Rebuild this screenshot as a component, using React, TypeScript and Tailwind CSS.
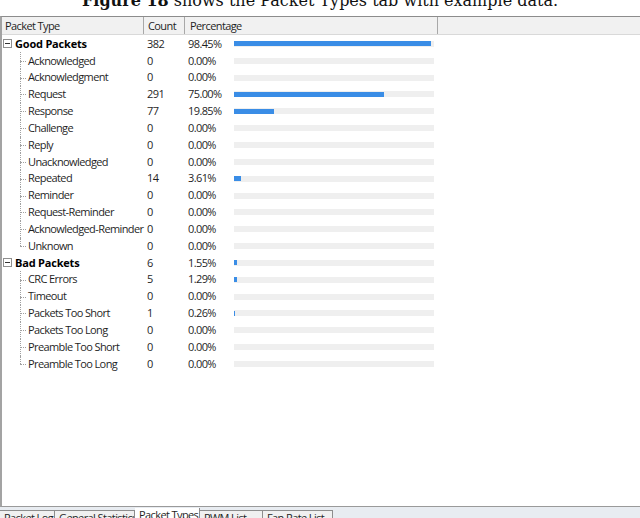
import React from 'react';

type Row = { name: string; count: number; pct: number };

const groups: { title: string; count: number; pct: number; items: Row[] }[] = [
  {
    title: 'Good Packets',
    count: 382,
    pct: 98.45,
    items: [
      { name: 'Acknowledged', count: 0, pct: 0 },
      { name: 'Acknowledgment', count: 0, pct: 0 },
      { name: 'Request', count: 291, pct: 75.0 },
      { name: 'Response', count: 77, pct: 19.85 },
      { name: 'Challenge', count: 0, pct: 0 },
      { name: 'Reply', count: 0, pct: 0 },
      { name: 'Unacknowledged', count: 0, pct: 0 },
      { name: 'Repeated', count: 14, pct: 3.61 },
      { name: 'Reminder', count: 0, pct: 0 },
      { name: 'Request-Reminder', count: 0, pct: 0 },
      { name: 'Acknowledged-Reminder', count: 0, pct: 0 },
      { name: 'Unknown', count: 0, pct: 0 },
    ],
  },
  {
    title: 'Bad Packets',
    count: 6,
    pct: 1.55,
    items: [
      { name: 'CRC Errors', count: 5, pct: 1.29 },
      { name: 'Timeout', count: 0, pct: 0 },
      { name: 'Packets Too Short', count: 1, pct: 0.26 },
      { name: 'Packets Too Long', count: 0, pct: 0 },
      { name: 'Preamble Too Short', count: 0, pct: 0 },
      { name: 'Preamble Too Long', count: 0, pct: 0 },
    ],
  },
];

const tabs = [
  { label: 'Packet Log', w: 'w-[55px]' },
  { label: 'General Statistics', w: 'w-[80px]' },
  { label: 'Packet Types', w: 'w-[65px]' },
  { label: 'PWM List', w: 'w-[63px]' },
  { label: 'Fan Rate List', w: 'w-[70px]' },
];

function Bar({ pct }: { pct: number }) {
  return (
    <div className="w-[200px] h-[6px] bg-[#efefef] flex items-center">
      {pct > 0 && (
        <div className="h-[5px] bg-[#3a8de6]" style={{ width: `${Math.max(1, Math.round(pct * 2))}px` }} />
      )}
    </div>
  );
}

function Cells({ count, pct }: { count: number; pct: number }) {
  return (
    <>
      <div className="w-[42px] pl-[3px]">{count}</div>
      <div className="w-[48px] pl-[2px]">{pct.toFixed(2)}%</div>
      <Bar pct={pct} />
    </>
  );
}

export default function App() {
  return (
    <div
      className="w-[640px] h-[518px] bg-white overflow-hidden flex flex-col text-[11px] tracking-[-0.6px] text-[#1f1f1f]"
      style={{ fontFamily: '"Open Sans", "Liberation Sans", sans-serif' }}
    >
      {/* caption, cut off by the page top */}
      <div className="h-[16px] overflow-hidden tracking-normal">
        <p
          className="-mt-[7px] leading-[16px] text-[16px] text-center text-[#111]"
          style={{ fontFamily: '"DejaVu Serif", serif' }}
        >
          <b>Figure 18</b> shows the Packet Types tab with example data.
        </p>
      </div>

      <div className="flex-1 flex flex-col border-t border-t-[#8c8c8c] border-l-2 border-l-[#a3a3a3] border-b border-b-[#9a9a9a]">
        {/* header */}
        <div className="h-[18px] flex bg-[#f1f1f1] border-b border-[#d9d9d9] leading-[17px]">
          <div className="w-[142px] pl-[3px] border-r border-[#a8a8a8]">Packet Type</div>
          <div className="w-[41px] pl-[4px] border-r border-[#a8a8a8]">Count</div>
          <div className="w-[253px] pl-[5px] border-r border-[#a8a8a8]">Percentage</div>
          <div className="flex-1" />
        </div>

        <div className="pt-[0.5px]">
          {groups.map((g) => (
            <div key={g.title}>
              <div className="h-[16.85px] flex items-center">
                <div className="w-[142px] flex items-center">
                  <div className="ml-[1px] w-[9px] h-[9px] border border-[#8f8f8f] bg-white flex items-center justify-center">
                    <div className="w-[5px] h-[1px] bg-[#333]" />
                  </div>
                  <span className="ml-[3px] font-bold tracking-[-0.2px] text-black">{g.title}</span>
                </div>
                <Cells count={g.count} pct={g.pct} />
              </div>
              {g.items.map((r, i) => {
                const last = i === g.items.length - 1;
                return (
                  <div key={r.name} className="h-[16.85px] flex items-center">
                    <div className="w-[142px] h-full flex items-center">
                      <div className="w-[18px] shrink-0" />
                      <div className="w-[6px] h-full relative shrink-0">
                        <div
                          className={
                            last
                              ? 'absolute left-0 top-0 h-1/2 border-l border-dotted border-[#a0a0a0]'
                              : 'absolute left-0 top-0 h-full border-l border-dotted border-[#a0a0a0]'
                          }
                        />
                        <div className="absolute left-0 top-1/2 w-[6px] border-t border-dotted border-[#a0a0a0]" />
                      </div>
                      <span className="ml-[2px] whitespace-nowrap">{r.name}</span>
                    </div>
                    <Cells count={r.count} pct={r.pct} />
                  </div>
                );
              })}
            </div>
          ))}
        </div>
      </div>

      {/* tab strip */}
      <div className="h-[11px] bg-[#e8ecf1] flex items-end overflow-hidden leading-[13px]">
        {tabs.map((t) => {
          const active = t.label === 'Packet Types';
          return (
            <div
              key={t.label}
              className={
                active
                  ? `${t.w} h-[10px] pl-[4px] bg-white border-r border-[#8d8d8d] overflow-hidden whitespace-nowrap`
                  : `${t.w} h-[8px] pl-[4px] bg-[#f0f0f0] border-r border-t border-[#8d8d8d] overflow-hidden whitespace-nowrap`
              }
            >
              {t.label}
            </div>
          );
        })}
      </div>
    </div>
  );
}
